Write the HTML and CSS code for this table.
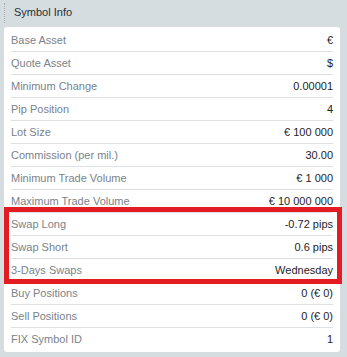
FILE: index.html
```html
<!DOCTYPE html>
<html>
<head>
<meta charset="utf-8">
<link rel="stylesheet" href="styles.css">
</head>
<body>
<div class="app">
  <div class="header">
    <span class="grip"></span>
    <span class="title">Symbol Info</span>
  </div>
  <div class="panel">
    <div class="row"><span class="label">Base Asset</span><span class="value">€</span></div>
    <div class="row"><span class="label">Quote Asset</span><span class="value">$</span></div>
    <div class="row"><span class="label">Minimum Change</span><span class="value">0.00001</span></div>
    <div class="row"><span class="label">Pip Position</span><span class="value">4</span></div>
    <div class="row"><span class="label">Lot Size</span><span class="value">€ 100 000</span></div>
    <div class="row"><span class="label">Commission (per mil.)</span><span class="value">30.00</span></div>
    <div class="row"><span class="label">Minimum Trade Volume</span><span class="value">€ 1 000</span></div>
    <div class="row"><span class="label">Maximum Trade Volume</span><span class="value">€ 10 000 000</span></div>
    <div class="row"><span class="label">Swap Long</span><span class="value">-0.72 pips</span></div>
    <div class="row"><span class="label">Swap Short</span><span class="value">0.6 pips</span></div>
    <div class="row"><span class="label">3-Days Swaps</span><span class="value">Wednesday</span></div>
    <div class="row"><span class="label">Buy Positions</span><span class="value">0 (€ 0)</span></div>
    <div class="row"><span class="label">Sell Positions</span><span class="value">0 (€ 0)</span></div>
    <div class="row"><span class="label">FIX Symbol ID</span><span class="value">1</span></div>
  </div>
  <div class="highlight"></div>
</div>
</body>
</html>
```
FILE: styles.css
```css
html, body {
  margin: 0;
  padding: 0;
  background: #d6dde0;
}
body {
  font-family: "Liberation Sans", Arial, sans-serif;
  font-size: 11px;
  width: 347px;
  height: 357px;
  overflow: hidden;
}
.app {
  position: relative;
  padding: 0 7px 0 4px;
}
.header {
  height: 27px;
  display: flex;
  align-items: center;
}
.grip {
  width: 2px;
  height: 20px;
  margin-top: -2px;
  border-left: 1px dotted #a8b0b4;
  box-sizing: border-box;
}
.title {
  margin-left: 8px;
  margin-top: -3px;
  color: #2a2f33;
  font-size: 11px;
}
.panel {
  background: #fff;
  border-radius: 3px;
  padding: 2px 7px;
}
.row {
  height: 22px;
  display: flex;
  align-items: center;
  justify-content: space-between;
  border-bottom: 1px solid #dde1e4;
}
.row:last-child {
  border-bottom: none;
}
.label {
  color: #7a828b;
}
.value {
  color: #1e2326;
}
.highlight {
  position: absolute;
  left: 4px;
  top: 207px;
  width: 338px;
  height: 77px;
  border: 5px solid #e31b23;
  box-sizing: border-box;
}
```
